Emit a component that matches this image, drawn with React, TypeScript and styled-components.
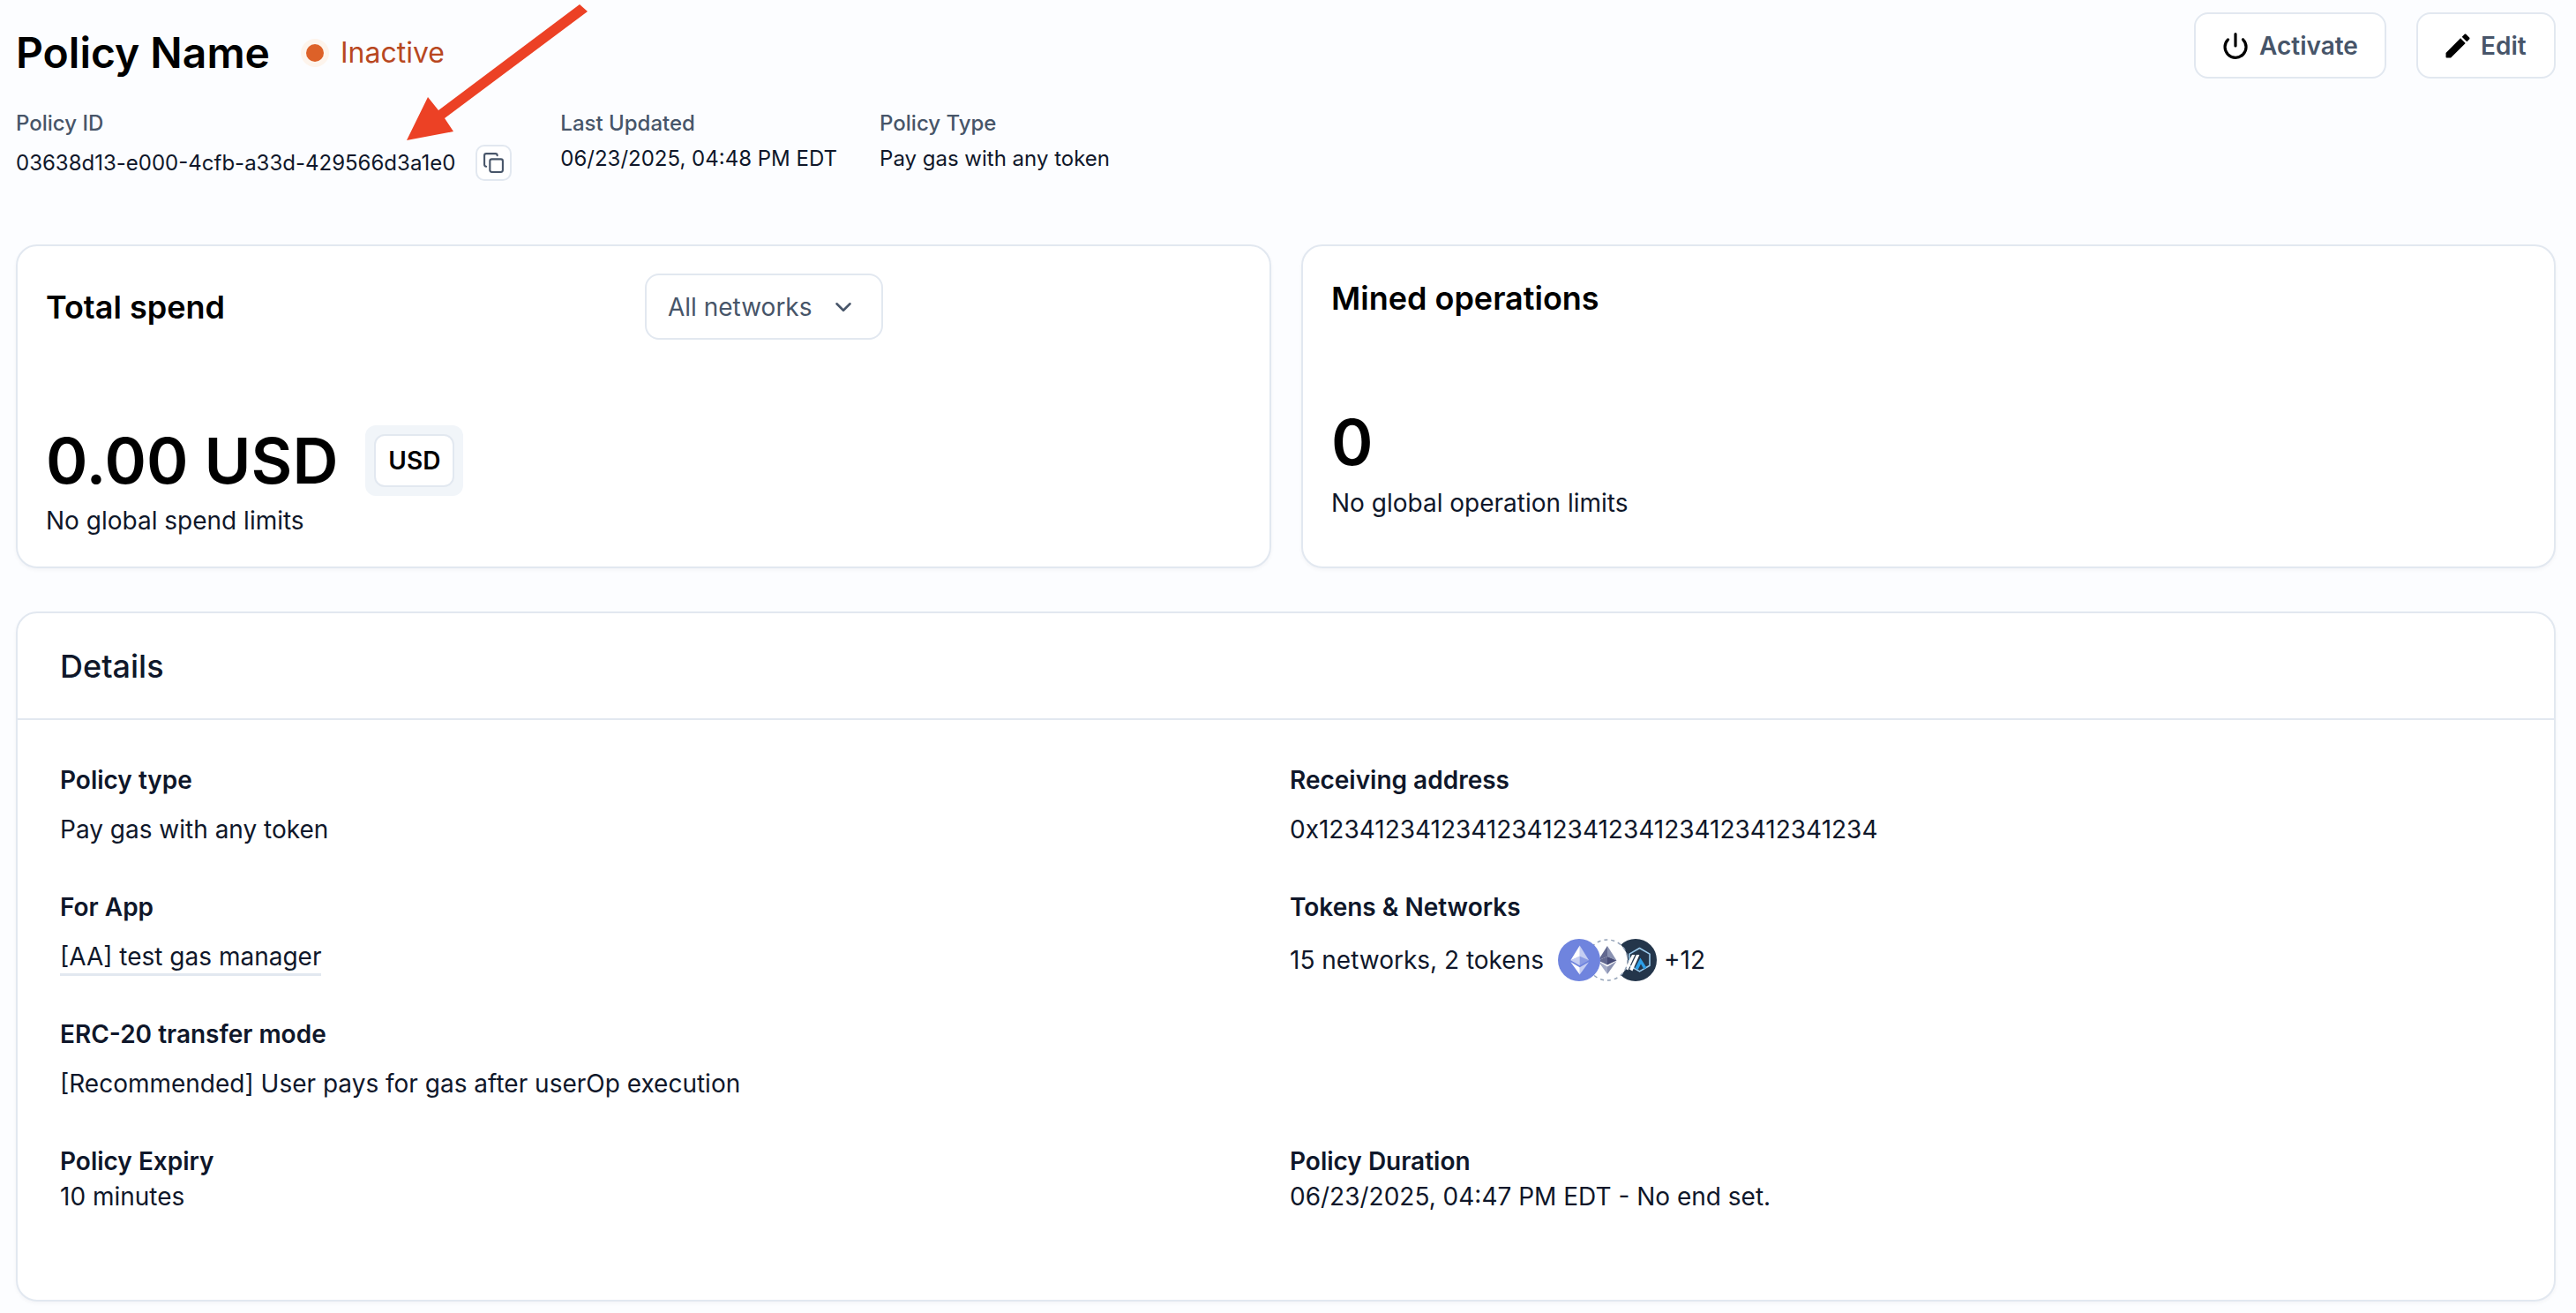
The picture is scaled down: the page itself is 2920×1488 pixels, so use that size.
import React from 'react';
import styled, { createGlobalStyle } from 'styled-components';
import { ChevronDown, Copy, Power } from 'lucide-react';

const GlobalStyle = createGlobalStyle`
  html, body {
    margin: 0;
    padding: 0;
    background: #fcfdff;
    font-family: Inter, "Liberation Sans", sans-serif;
    color: #0f172a;
  }
  * { box-sizing: border-box; }
`;

const Page = styled.div`
  position: relative;
  width: 2920px;
  height: 1488px;
  overflow: hidden;
  padding: 14px 23px 0 18px;
`;

const Header = styled.header`
  display: flex;
  justify-content: space-between;
  align-items: flex-start;
`;

const HeaderLeft = styled.div`
  padding-top: 14px;
`;

const TitleRow = styled.div`
  display: flex;
  align-items: center;
  height: 64px;
`;

const Title = styled.h1`
  margin: 0;
  font-size: 48px;
  line-height: 64px;
  font-weight: 600;
  color: #000;
`;

const StatusDot = styled.span`
  width: 32px;
  height: 32px;
  margin-left: 35px;
  border-radius: 50%;
  background: #fdf4ec;
  display: flex;
  align-items: center;
  justify-content: center;
  &::after {
    content: '';
    width: 20px;
    height: 20px;
    border-radius: 50%;
    background: #dd6128;
  }
`;

const StatusText = styled.span`
  margin-left: 13px;
  font-size: 32px;
  line-height: 40px;
  color: #b8481f;
`;

const MetaRow = styled.div`
  display: flex;
  gap: 48px;
  margin-top: 32px;
`;

const MetaColumn = styled.div<{ $extra?: number }>`
  margin-right: ${({ $extra }) => $extra || 0}px;
`;

const MetaLabel = styled.div`
  font-size: 24px;
  line-height: 32px;
  font-weight: 500;
  color: #475569;
  margin-bottom: 8px;
`;

const MetaValue = styled.div`
  font-size: 24px;
  line-height: 32px;
  color: #0f172a;
`;

const IdRow = styled.div`
  display: flex;
  align-items: center;
  gap: 23px;
  font-size: 24px;
  line-height: 32px;
  color: #0f172a;
`;

const CopyButton = styled.button`
  width: 41px;
  height: 41px;
  padding: 0;
  display: flex;
  align-items: center;
  justify-content: center;
  background: #fff;
  border: 2px solid #e2e8f0;
  border-radius: 10px;
  color: #475569;
`;

const HeaderActions = styled.div`
  display: flex;
  gap: 34px;
`;

const ActionButton = styled.button<{ $width: number; $pad: number; $gap: number }>`
  width: ${({ $width }) => $width}px;
  height: 75px;
  padding: 0 0 0 ${({ $pad }) => $pad}px;
  display: flex;
  align-items: center;
  gap: ${({ $gap }) => $gap}px;
  background: #fff;
  border: 2px solid #e2e8f0;
  border-radius: 16px;
  font-family: inherit;
  font-size: 28px;
  font-weight: 600;
  color: #475569;
  svg { color: #000; flex: none; }
`;

const CardGrid = styled.section`
  display: grid;
  grid-template-columns: 1423px 1422px;
  gap: 34px;
  margin-top: 72px;
`;

const Card = styled.div`
  background: #fff;
  border: 2px solid #e2e8f0;
  border-radius: 24px;
  box-shadow: 0 2px 4px rgba(15, 23, 42, 0.04);
`;

const StatCard = styled(Card)`
  height: 367px;
  padding: 31px 32px 0;
`;

const SpendTop = styled.div`
  display: grid;
  grid-template-columns: 679px 270px;
  align-items: center;
`;

const CardTitle = styled.h2`
  margin: 0;
  font-size: 36px;
  line-height: 44px;
  font-weight: 600;
  color: #000;
`;

const SelectBox = styled.div`
  height: 75px;
  display: flex;
  align-items: center;
  justify-content: space-between;
  padding: 0 28px 0 24px;
  background: #fff;
  border: 2px solid #e2e8f0;
  border-radius: 16px;
  font-size: 28px;
  color: #475569;
`;

const AmountRow = styled.div`
  display: flex;
  align-items: center;
  margin-top: 97px;
`;

const Amount = styled.div`
  font-size: 72px;
  line-height: 80px;
  font-weight: 600;
  color: #000;
`;

const CurrencyTrack = styled.div`
  width: 111px;
  height: 80px;
  margin-left: 31px;
  display: flex;
  align-items: center;
  justify-content: center;
  background: #f1f5f9;
  border-radius: 12px;
`;

const CurrencyChip = styled.div`
  width: 91px;
  height: 60px;
  display: flex;
  align-items: center;
  justify-content: center;
  background: #fff;
  border: 2px solid #e2e8f0;
  border-radius: 12px;
  font-size: 28px;
  font-weight: 600;
  color: #000;
`;

const StatNote = styled.div<{ $gap: number }>`
  margin-top: ${({ $gap }) => $gap}px;
  font-size: 28px;
  line-height: 40px;
  color: #0f172a;
`;

const OperationsCard = styled(StatCard)`
  padding-top: 37px;
`;

const OperationCount = styled(Amount)`
  margin-top: 101px;
`;

const DetailsCard = styled(Card)`
  height: 782px;
  margin-top: 49px;
`;

const DetailsHeader = styled.div`
  height: 121px;
  padding: 0 48px;
  display: flex;
  align-items: center;
  border-bottom: 2px solid #e2e8f0;
  font-size: 36px;
  font-weight: 500;
  color: #0f172a;
`;

const DetailsGrid = styled.div`
  display: grid;
  grid-template-columns: 1394px 1fr;
  grid-auto-rows: 144px;
  padding: 48px 48px 0;
`;

const Field = styled.div``;

const FieldLabel = styled.div<{ $tight?: boolean }>`
  font-size: 28px;
  line-height: 40px;
  font-weight: 600;
  color: #0f172a;
  margin-bottom: ${({ $tight }) => ($tight ? 0 : 16)}px;
`;

const FieldValue = styled.div`
  font-size: 28px;
  line-height: 40px;
  color: #0f172a;
`;

const AppLink = styled.span`
  display: inline-block;
  line-height: 38px;
  border-bottom: 3px solid #e2e8f0;
`;

const TokensValue = styled(FieldValue)`
  display: flex;
  align-items: center;
  height: 48px;
`;

const TokenStack = styled.div`
  display: flex;
  margin: 0 8px 0 16px;
`;

const TokenIcon = styled.svg<{ $layer: number }>`
  width: 48px;
  height: 48px;
  flex: none;
  position: relative;
  z-index: ${({ $layer }) => $layer};
  & + & { margin-left: -16px; }
`;

const ArrowOverlay = styled.svg`
  position: absolute;
  top: 0;
  left: 440px;
  width: 240px;
  height: 170px;
  pointer-events: none;
`;

const EthMark = () => (
  <g fill="#fff" transform="translate(1.3 1.3) scale(0.92)">
    <path fillOpacity=".6" d="M16.5 4v8.87l7.5 3.35z" />
    <path d="M16.5 4L9 16.22l7.5-3.35z" />
    <path fillOpacity=".6" d="M16.5 21.97V28L24 17.62z" />
    <path d="M16.5 28v-6.03L9 17.62z" />
    <path fillOpacity=".2" d="M16.5 20.57l7.5-4.35-7.5-3.35z" />
    <path fillOpacity=".6" d="M9 16.22l7.5 4.35v-7.7z" />
  </g>
);

const EthNetworkIcon = () => (
  <TokenIcon $layer={3} viewBox="0 0 32 32">
    <circle cx="16" cy="16" r="16" fill="#6f84de" />
    <EthMark />
  </TokenIcon>
);

const EthTokenIcon = () => (
  <TokenIcon $layer={2} viewBox="0 0 48 48">
    <circle cx="24" cy="24" r="23" fill="#fff" stroke="#94a3b8" strokeWidth="1.5" strokeDasharray="4 4" />
    <path fill="#8a92b2" d="M24 8v12l10.5 4.6z" />
    <path fill="#62688f" d="M24 8L13.5 24.6 24 20z" />
    <path fill="#8a92b2" d="M24 31.5V40l10.5-14.8z" />
    <path fill="#a5acc8" d="M24 40v-8.5l-10.5-6.3z" />
    <path fill="#454a75" d="M24 29.6l10.5-5L24 20z" />
    <path fill="#62688f" d="M13.5 24.6l10.5 5V20z" />
  </TokenIcon>
);

const ArbitrumIcon = () => (
  <TokenIcon $layer={1} viewBox="0 0 48 48">
    <circle cx="24" cy="24" r="24" fill="#24364b" />
    <path d="M28.5 10.5l11.5 6.6v13.2l-11.5 6.6L17 30.3V17.1z" fill="#24364b" stroke="#9dcced" strokeWidth="1.6" strokeLinejoin="round" />
    <path d="M20 18h3.4L15.4 35.4 12 33.6z" fill="#fff" />
    <path d="M25 18h3.4L20.4 36.4 17 34.6z" fill="#fff" />
    <path d="M29.4 21.5L23.4 33l3.2 2 3.4-6.6 3.4 6.2 3-2z" fill="#2d9fe8" />
  </TokenIcon>
);

const RoundedPencil = () => (
  <svg width="36" height="36" viewBox="0 0 24 24" fill="currentColor">
    <path d="M3 17.46v3.04c0 .28.22.5.5.5h3.04c.13 0 .26-.05.35-.15L17.81 9.94l-3.75-3.75L3.15 17.1c-.1.1-.15.22-.15.36zM20.71 7.04c.39-.39.39-1.02 0-1.41l-2.34-2.34c-.39-.39-1.02-.39-1.41 0l-1.83 1.83 3.75 3.75 1.83-1.83z" />
  </svg>
);

const App = () => (
  <Page>
    <GlobalStyle />
    <Header>
      <HeaderLeft>
        <TitleRow>
          <Title>Policy Name</Title>
          <StatusDot />
          <StatusText>Inactive</StatusText>
        </TitleRow>
        <MetaRow>
          <MetaColumn $extra={7}>
            <MetaLabel>Policy ID</MetaLabel>
            <IdRow>
              03638d13-e000-4cfb-a33d-429566d3a1e0
              <CopyButton>
                <Copy size={25} strokeWidth={2} />
              </CopyButton>
            </IdRow>
          </MetaColumn>
          <MetaColumn>
            <MetaLabel>Last Updated</MetaLabel>
            <MetaValue>06/23/2025, 04:48 PM EDT</MetaValue>
          </MetaColumn>
          <MetaColumn>
            <MetaLabel>Policy Type</MetaLabel>
            <MetaValue>Pay gas with any token</MetaValue>
          </MetaColumn>
        </MetaRow>
      </HeaderLeft>
      <HeaderActions>
        <ActionButton $width={218} $pad={29} $gap={11}>
          <Power size={32} strokeWidth={2.4} />
          Activate
        </ActionButton>
        <ActionButton $width={158} $pad={27} $gap={8}>
          <RoundedPencil />
          Edit
        </ActionButton>
      </HeaderActions>
    </Header>

    <CardGrid>
      <StatCard>
        <SpendTop>
          <CardTitle>Total spend</CardTitle>
          <SelectBox>
            All networks
            <ChevronDown size={30} strokeWidth={2} />
          </SelectBox>
        </SpendTop>
        <AmountRow>
          <Amount>0.00 USD</Amount>
          <CurrencyTrack>
            <CurrencyChip>USD</CurrencyChip>
          </CurrencyTrack>
        </AmountRow>
        <StatNote $gap={8}>No global spend limits</StatNote>
      </StatCard>
      <OperationsCard>
        <CardTitle>Mined operations</CardTitle>
        <OperationCount>0</OperationCount>
        <StatNote $gap={9}>No global operation limits</StatNote>
      </OperationsCard>
    </CardGrid>

    <DetailsCard>
      <DetailsHeader>Details</DetailsHeader>
      <DetailsGrid>
        <Field>
          <FieldLabel>Policy type</FieldLabel>
          <FieldValue>Pay gas with any token</FieldValue>
        </Field>
        <Field>
          <FieldLabel>Receiving address</FieldLabel>
          <FieldValue>0x1234123412341234123412341234123412341234</FieldValue>
        </Field>
        <Field>
          <FieldLabel>For App</FieldLabel>
          <FieldValue>
            <AppLink>[AA] test gas manager</AppLink>
          </FieldValue>
        </Field>
        <Field>
          <FieldLabel>Tokens &amp; Networks</FieldLabel>
          <TokensValue>
            15 networks, 2 tokens
            <TokenStack>
              <EthNetworkIcon />
              <EthTokenIcon />
              <ArbitrumIcon />
            </TokenStack>
            +12
          </TokensValue>
        </Field>
        <Field>
          <FieldLabel>ERC-20 transfer mode</FieldLabel>
          <FieldValue>[Recommended] User pays for gas after userOp execution</FieldValue>
        </Field>
        <Field />
        <Field>
          <FieldLabel $tight>Policy Expiry</FieldLabel>
          <FieldValue>10 minutes</FieldValue>
        </Field>
        <Field>
          <FieldLabel $tight>Policy Duration</FieldLabel>
          <FieldValue>06/23/2025, 04:47 PM EDT - No end set.</FieldValue>
        </Field>
      </DetailsGrid>
    </DetailsCard>

    <ArrowOverlay viewBox="440 0 240 170">
      <path d="M657 5 L666 13 L504 134 L514 149 L461 159 L485 110 L497 125 Z" fill="#ec4125" />
    </ArrowOverlay>
  </Page>
);

export default App;
